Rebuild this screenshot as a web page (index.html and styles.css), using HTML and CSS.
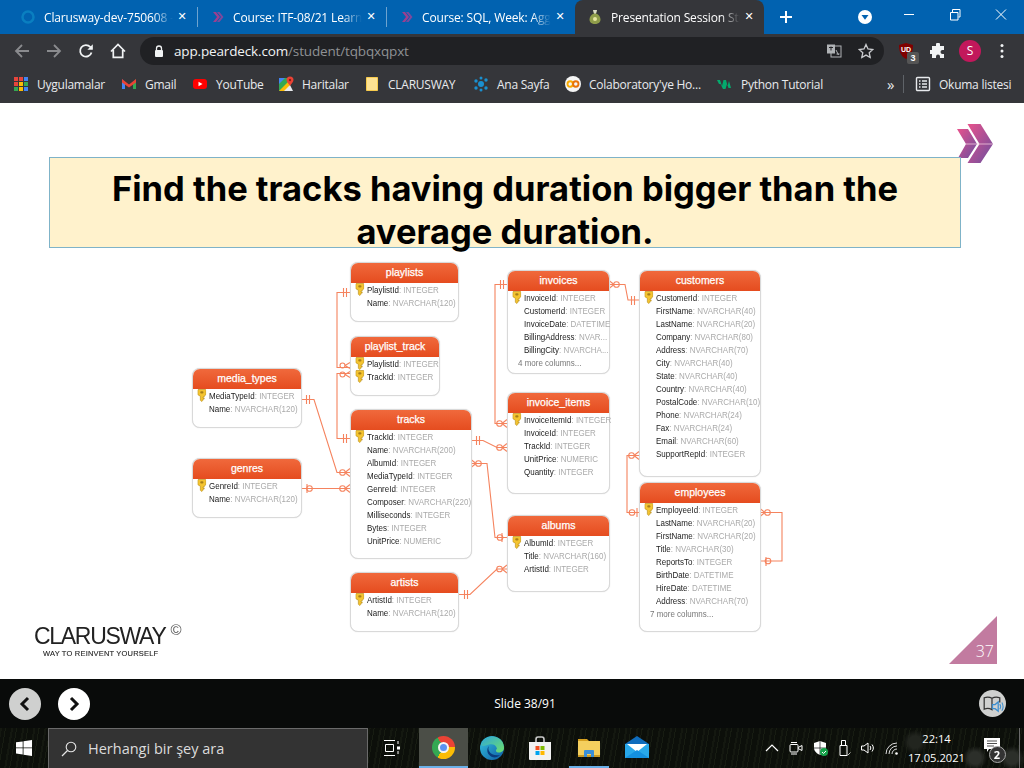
FILE: index.html
```html
<!DOCTYPE html>
<html lang="tr">
<head>
<meta charset="utf-8">
<title>Presentation Session</title>
<link rel="stylesheet" href="styles.css">
</head>
<body>
<svg class="defs" width="0" height="0">
  <defs>
    <symbol id="key" viewBox="0 0 8 13" preserveAspectRatio="none">
      <path d="M.7.5h6.600l.2 1v4.200L6 7.200v.9H5v1h1v1H5v1L4 12.500 2.700 11.300V7.200L.5 5.700v-4.200z" fill="#f4c430" stroke="#b98f1e" stroke-width=".6"/>
      <rect x="2.600" y="2.200" width="2.800" height="2.200" rx="1" fill="#a87f18"/>
    </symbol>
    <symbol id="chev" viewBox="0 0 16 16">
      <path d="M4 3l4 5-4 5h3l4-5-4-5z" fill="#9c3f8f"/>
      <path d="M8 3l4 5-4 5h2.500l4-5-4-5z" fill="#7b4a9e"/>
    </symbol>
    <linearGradient id="lg" x1="0" y1="0" x2="1" y2="1">
      <stop offset="0" stop-color="#e8528c"/><stop offset="1" stop-color="#6b4f9f"/>
    </linearGradient>
  </defs>
</svg>

<header class="tabstrip">
  <div class="tab">
    <svg class="tab-ico" viewBox="0 0 16 16"><circle cx="8" cy="8" r="5.500" fill="none" stroke="#0a7fc0" stroke-width="2.500"/></svg>
    <span class="tab-title">Clarusway-dev-750608 -</span>
    <span class="tab-x">✕</span>
  </div>
  <div class="tab tab-sep">
    <svg class="tab-ico" viewBox="0 0 16 16"><use href="#chev"/></svg>
    <span class="tab-title">Course: ITF-08/21 Learn</span>
    <span class="tab-x">✕</span>
  </div>
  <div class="tab tab-sep">
    <svg class="tab-ico" viewBox="0 0 16 16"><use href="#chev"/></svg>
    <span class="tab-title">Course: SQL, Week: Agg</span>
    <span class="tab-x">✕</span>
  </div>
  <div class="tab tab-active">
    <svg class="tab-ico" viewBox="0 0 16 16"><path d="M6 1h4L9 4.500c3 1 4.500 3.500 4.500 6C13.500 13.500 11 15 8 15s-5.500-1.500-5.500-4.500c0-2.500 1.500-5 4.500-6z" fill="#8f9d4a"/><path d="M6 1h4L9 4.500H7z" fill="#d8d8c8"/><circle cx="8" cy="10" r="2" fill="#e6e6a0"/></svg>
    <span class="tab-title">Presentation Session Stu</span>
    <span class="tab-x">✕</span>
  </div>
  <svg class="newtab" viewBox="0 0 14 14"><path d="M7 1v12M1 7h12" stroke="#fff" stroke-width="2"/></svg>
  <svg class="profile-down" viewBox="0 0 14 14"><circle cx="7" cy="7" r="7" fill="#fff"/><path d="M3.500 5h7L7 9.800z" fill="#0162b0"/></svg>
  <div class="winctl">
    <svg viewBox="0 0 46 30"><path d="M18 14.500h10" stroke="#fff"/></svg>
    <svg viewBox="0 0 46 30"><path d="M18.500 12.500h7.500v7.500h-7.500zM20.500 12v-2.500h7.500v7.500H26.500" fill="none" stroke="#fff"/></svg>
    <svg viewBox="0 0 46 30"><path d="M18 9.500l10 10M28 9.500l-10 10" stroke="#fff"/></svg>
  </div>
</header>

<nav class="toolbar">
  <svg class="tool dim" viewBox="0 0 16 16"><path d="M15 8H2M8 2L2 8l6 6" fill="none" stroke="#8a8b8e" stroke-width="1.800"/></svg>
  <svg class="tool dim" viewBox="0 0 16 16"><path d="M1 8h13M8 2l6 6-6 6" fill="none" stroke="#8a8b8e" stroke-width="1.800"/></svg>
  <svg class="tool" viewBox="0 0 16 16"><path d="M13.500 9.500A5.800 5.800 0 1 1 12.300 4L14 5.700" fill="none" stroke="#f1f3f4" stroke-width="1.800"/><path d="M14.800 1.300v5.400H9.400z" fill="#f1f3f4"/></svg>
  <svg class="tool" viewBox="0 0 16 16"><path d="M1 8.500L8 1.500l7 7M3.300 7v7.300h9.400V7" fill="none" stroke="#f1f3f4" stroke-width="1.700"/></svg>
  <div class="omnibox">
    <svg class="lock" viewBox="0 0 10 13"><path d="M2.500 5V3.500a2.500 2.500 0 0 1 5 0V5" fill="none" stroke="#f1f3f4" stroke-width="1.300"/><rect x="1" y="5" width="8" height="7" rx="1" fill="#f1f3f4"/></svg>
    <span class="url">app.peardeck.com<span class="url-path">/student/tqbqxqpxt</span></span>
    <svg class="omni-ico translate" viewBox="0 0 16 16"><rect x="5" y="3" width="10" height="11" fill="#202124" stroke="#b0b3b6"/><rect x="1" y="1.500" width="8" height="9" fill="#b0b3b6"/><path d="M3 4.500h4M5 3.500v4" stroke="#202124"/><path d="M10 7l2.500 5M10.500 11h3" stroke="#b0b3b6"/></svg>
    <svg class="omni-ico star" viewBox="0 0 16 16"><path d="M8 1.500l2 4.500 4.800.5-3.600 3.200 1 4.800L8 12.100 3.800 14.500l1-4.800L1.200 6.500 6 6z" fill="none" stroke="#c9cbce" stroke-width="1.300"/></svg>
  </div>
  <div class="ext ublock">
    <svg viewBox="0 0 16 16"><path d="M8 0l7 2c0 6-1.500 11-7 14C2.500 13 1 8 1 2z" fill="#800000"/></svg>
    <span class="ub-txt">UD</span><span class="ub-badge">3</span>
  </div>
  <svg class="ext puzzle" viewBox="0 0 16 16"><path d="M6 1.500a2 2 0 0 1 4 0V3h4v4h-1.500a2 2 0 0 0 0 4H14v4H10v-1.500a2 2 0 0 0-4 0V15H2v-4H.8a2 2 0 0 1 0-4H2V3h4z" fill="#f1f3f4"/></svg>
  <span class="avatar">S</span>
  <svg class="ext dots" viewBox="0 0 4 16"><circle cx="2" cy="2.500" r="1.500" fill="#f1f3f4"/><circle cx="2" cy="8" r="1.500" fill="#f1f3f4"/><circle cx="2" cy="13.500" r="1.500" fill="#f1f3f4"/></svg>
</nav>

<nav class="bookmarks">
  <div class="bm">
    <svg class="bm-ico" viewBox="0 0 16 16"><path d="M1 1h4v4H1z" fill="#e8453c"/><path d="M6 1h4v4H6z" fill="#e8453c"/><path d="M11 1h4v4h-4z" fill="#4285f4"/><path d="M1 6h4v4H1z" fill="#e8453c"/><path d="M6 6h4v4H6z" fill="#fbbc05"/><path d="M11 6h4v4h-4z" fill="#34a853"/><path d="M1 11h4v4H1z" fill="#34a853"/><path d="M6 11h4v4H6z" fill="#fbbc05"/><path d="M11 11h4v4h-4z" fill="#4285f4"/></svg>
    <span>Uygulamalar</span>
  </div>
  <div class="bm">
    <svg class="bm-ico" viewBox="0 0 16 16"><path d="M1 3v10h3V7z" fill="#4285f4"/><path d="M15 3v10h-3V7z" fill="#34a853"/><path d="M1 3l7 5.500L15 3v3.500l-7 5-7-5z" fill="#ea4335"/></svg>
    <span>Gmail</span>
  </div>
  <div class="bm">
    <svg class="bm-ico" viewBox="0 0 16 16"><rect x="1" y="3" width="14" height="10" rx="3" fill="#f00"/><path d="M6.500 5.800L10.500 8l-4 2.200z" fill="#fff"/></svg>
    <span>YouTube</span>
  </div>
  <div class="bm">
    <svg class="bm-ico" viewBox="0 0 16 16"><path d="M1 2h11v13H1z" fill="#34a853"/><path d="M1 15L12 4v11z" fill="#fbbc05"/><path d="M1 2h6L1 8z" fill="#4285f4"/><path d="M6 15L12 9l3 6z" fill="#e8eaed"/><path d="M12 .5a3.500 3.500 0 0 1 3.500 3.500C15.500 6 13 8 12 10 11 8 8.500 6 8.500 4A3.500 3.500 0 0 1 12 .5z" fill="#ea4335"/><circle cx="12" cy="4" r="1.200" fill="#8f1c15"/></svg>
    <span>Haritalar</span>
  </div>
  <div class="bm">
    <svg class="bm-ico" viewBox="0 0 16 16"><path d="M2.500 1.500h11v13h-11z" fill="#fde293" stroke="#f7cb4d"/></svg>
    <span>CLARUSWAY</span>
  </div>
  <div class="bm">
    <svg class="bm-ico" viewBox="0 0 16 16"><g fill="#1a90d0"><circle cx="8" cy="8" r="3"/><circle cx="3" cy="5" r="1.700"/><circle cx="13" cy="4" r="1.700"/><circle cx="3" cy="12" r="1.700"/><circle cx="13" cy="12" r="1.700"/><circle cx="8" cy="2" r="1.500"/><circle cx="8" cy="14" r="1.500"/></g></svg>
    <span>Ana Sayfa</span>
  </div>
  <div class="bm">
    <svg class="bm-ico" viewBox="0 0 16 16"><circle cx="8" cy="8" r="8" fill="#f5f5f5"/><circle cx="5.200" cy="8" r="2.700" fill="none" stroke="#f9ab00" stroke-width="1.900"/><circle cx="10.800" cy="8" r="2.700" fill="none" stroke="#e8710a" stroke-width="1.900"/></svg>
    <span>Colaboratory'ye Ho...</span>
  </div>
  <div class="bm">
    <svg class="bm-ico" viewBox="0 0 16 16"><path d="M0 4h3l2 6 1.500-6h2.500l1.500 6L12 5l2 7h-2.500L10 8l-1.500 5H6L3.500 8 2 8z" fill="#04aa6d"/></svg>
    <span>Python Tutorial</span>
  </div>
  <span class="bm-more">»</span>
  <div class="bm bm-read">
    <svg class="bm-ico" viewBox="0 0 16 16"><rect x="1.500" y="1.500" width="13" height="13" rx="1" fill="none" stroke="#e8eaed" stroke-width="1.400"/><path d="M4 5h1.500M7 5h5M4 8h1.500M7 8h5M4 11h1.500M7 11h5" stroke="#e8eaed" stroke-width="1.300"/></svg>
    <span>Okuma listesi</span>
  </div>
</nav>

<main class="slide">
  <svg class="brand" viewBox="0 0 36 39">
    <path d="M10.500 0h13L36 20 23.500 39h-13L22.500 20z" fill="url(#lg)"/>
    <path d="M0 5h11l9 15-9 14H1l8-14z" fill="url(#lg)"/>
    <path d="M9 20h27" stroke="#f3c6dc" stroke-width=".8"/>
  </svg>
  <h1 class="title">Find the tracks having duration bigger than the average duration.</h1>

  <div class="erd">
    <svg class="links" viewBox="0 0 1024 768">
      <g fill="none" stroke="#f5835e" stroke-width="1.100">
        <path d="M350 292.500h-13V367.500h13M350 373.500h-13v65h13"/>
        <path d="M343.500 288v9M346.500 288v9M343.500 434v9M346.500 434v9"/>
        <path d="M345 365.500l5-3M345 365.500l5 3M345 374.500l5-3M345 374.500l5 3"/>
        <circle cx="342.500" cy="365.500" r="2.500"/><circle cx="342.500" cy="374.500" r="2.500"/>

        <path d="M301 399.500h13L337 472.500h13M306.500 395v9M309.500 395v9"/>
        <path d="M345 472.500l5-4M345 472.500l5 4"/><circle cx="342.500" cy="472.500" r="2.800"/>

        <path d="M301 488.500h49M307 484v9"/><circle cx="309.500" cy="488.500" r="2.800"/>
        <path d="M345 488.500l5-4M345 488.500l5 4"/><circle cx="342.500" cy="488.500" r="2.800"/>

        <path d="M471 440.500h12l14 7h10M476.500 436v9M479.500 436v9"/>
        <path d="M502 447.500l5-4M502 447.500l5 4"/><circle cx="499.500" cy="447.500" r="2.800"/>

        <path d="M471 463.500h16l8 74h12M502 533v9"/><circle cx="500" cy="537.500" r="2.800"/>
        <path d="M476 463.500l-5-4M476 463.500l-5 4"/><circle cx="478.500" cy="463.500" r="2.800"/>

        <path d="M458 594.500h12l27-25.500h10M464.500 590v9M467.500 590v9"/>
        <path d="M502 569l5-4M502 569l5 4"/><circle cx="499.500" cy="569" r="2.800"/>

        <path d="M507 284.500h-12v139h12M500.500 280v9M503.500 280v9"/>
        <path d="M502 423.500l5-4M502 423.500l5 4"/><circle cx="499.500" cy="423.500" r="2.800"/>

        <path d="M609 284.500h16l3 15.500h11M631.500 296v9M634.500 296v9"/>
        <path d="M614 284.500l-5-4M614 284.500l-5 4"/><circle cx="616.500" cy="284.500" r="2.800"/>

        <path d="M639 455.500h-12v57h12M637 508v9"/>
        <path d="M634 455.500l5-4M634 455.500l5 4"/><circle cx="631.500" cy="455.500" r="2.800"/>
        <circle cx="632" cy="512.500" r="2.800"/>

        <path d="M760 512.500h22v48.500h-22M766 557v9"/>
        <path d="M765 512.500l-5-4M765 512.500l-5 4"/><circle cx="767.500" cy="512.500" r="2.800"/>
        <circle cx="768" cy="561" r="2.800"/>
      </g>
    </svg>

    <section class="tbl t-playlists">
      <h2>playlists</h2>
      <p class="pk"><svg class="key"><use href="#key"/></svg><b>PlaylistId</b>: INTEGER</p>
      <p><b>Name</b>: NVARCHAR(120)</p>
    </section>
    <section class="tbl t-playlist-track">
      <h2>playlist_track</h2>
      <p class="pk"><svg class="key"><use href="#key"/></svg><b>PlaylistId</b>: INTEGER</p>
      <p class="pk"><svg class="key"><use href="#key"/></svg><b>TrackId</b>: INTEGER</p>
    </section>
    <section class="tbl t-media">
      <h2>media_types</h2>
      <p class="pk"><svg class="key"><use href="#key"/></svg><b>MediaTypeId</b>: INTEGER</p>
      <p><b>Name</b>: NVARCHAR(120)</p>
    </section>
    <section class="tbl t-tracks">
      <h2>tracks</h2>
      <p class="pk"><svg class="key"><use href="#key"/></svg><b>TrackId</b>: INTEGER</p>
      <p><b>Name</b>: NVARCHAR(200)</p>
      <p><b>AlbumId</b>: INTEGER</p>
      <p><b>MediaTypeId</b>: INTEGER</p>
      <p><b>GenreId</b>: INTEGER</p>
      <p><b>Composer</b>: NVARCHAR(220)</p>
      <p><b>Milliseconds</b>: INTEGER</p>
      <p><b>Bytes</b>: INTEGER</p>
      <p><b>UnitPrice</b>: NUMERIC</p>
    </section>
    <section class="tbl t-genres">
      <h2>genres</h2>
      <p class="pk"><svg class="key"><use href="#key"/></svg><b>GenreId</b>: INTEGER</p>
      <p><b>Name</b>: NVARCHAR(120)</p>
    </section>
    <section class="tbl t-artists">
      <h2>artists</h2>
      <p class="pk"><svg class="key"><use href="#key"/></svg><b>ArtistId</b>: INTEGER</p>
      <p><b>Name</b>: NVARCHAR(120)</p>
    </section>
    <section class="tbl t-invoices">
      <h2>invoices</h2>
      <p class="pk"><svg class="key"><use href="#key"/></svg><b>InvoiceId</b>: INTEGER</p>
      <p><b>CustomerId</b>: INTEGER</p>
      <p><b>InvoiceDate</b>: DATETIME</p>
      <p><b>BillingAddress</b>: NVAR...</p>
      <p><b>BillingCity</b>: NVARCHA...</p>
      <p class="more">4 more columns...</p>
    </section>
    <section class="tbl t-items">
      <h2>invoice_items</h2>
      <p class="pk"><svg class="key"><use href="#key"/></svg><b>InvoiceItemId</b>: INTEGER</p>
      <p><b>InvoiceId</b>: INTEGER</p>
      <p><b>TrackId</b>: INTEGER</p>
      <p><b>UnitPrice</b>: NUMERIC</p>
      <p><b>Quantity</b>: INTEGER</p>
    </section>
    <section class="tbl t-albums">
      <h2>albums</h2>
      <p class="pk"><svg class="key"><use href="#key"/></svg><b>AlbumId</b>: INTEGER</p>
      <p><b>Title</b>: NVARCHAR(160)</p>
      <p><b>ArtistId</b>: INTEGER</p>
    </section>
    <section class="tbl t-customers">
      <h2>customers</h2>
      <p class="pk"><svg class="key"><use href="#key"/></svg><b>CustomerId</b>: INTEGER</p>
      <p><b>FirstName</b>: NVARCHAR(40)</p>
      <p><b>LastName</b>: NVARCHAR(20)</p>
      <p><b>Company</b>: NVARCHAR(80)</p>
      <p><b>Address</b>: NVARCHAR(70)</p>
      <p><b>City</b>: NVARCHAR(40)</p>
      <p><b>State</b>: NVARCHAR(40)</p>
      <p><b>Country</b>: NVARCHAR(40)</p>
      <p><b>PostalCode</b>: NVARCHAR(10)</p>
      <p><b>Phone</b>: NVARCHAR(24)</p>
      <p><b>Fax</b>: NVARCHAR(24)</p>
      <p><b>Email</b>: NVARCHAR(60)</p>
      <p><b>SupportRepId</b>: INTEGER</p>
    </section>
    <section class="tbl t-employees">
      <h2>employees</h2>
      <p class="pk"><svg class="key"><use href="#key"/></svg><b>EmployeeId</b>: INTEGER</p>
      <p><b>LastName</b>: NVARCHAR(20)</p>
      <p><b>FirstName</b>: NVARCHAR(20)</p>
      <p><b>Title</b>: NVARCHAR(30)</p>
      <p><b>ReportsTo</b>: INTEGER</p>
      <p><b>BirthDate</b>: DATETIME</p>
      <p><b>HireDate</b>: DATETIME</p>
      <p><b>Address</b>: NVARCHAR(70)</p>
      <p class="more">7 more columns...</p>
    </section>
  </div>

  <div class="logo">
    <div class="logo-name">CLARUSWAY<span class="logo-c">©</span></div>
    <div class="logo-sub">WAY TO REINVENT YOURSELF</div>
  </div>
  <div class="pageno"><span>37</span></div>
</main>

<footer class="deckbar">
  <div class="nav-btn nav-prev"><svg viewBox="0 0 12 16"><path d="M9 2L3 8l6 6" fill="none" stroke="#111" stroke-width="3"/></svg></div>
  <div class="nav-btn nav-next"><svg viewBox="0 0 12 16"><path d="M3 2l6 6-6 6" fill="none" stroke="#111" stroke-width="3"/></svg></div>
  <span class="slide-count">Slide 38/91</span>
  <div class="reader">
    <svg viewBox="0 0 26 26"><path d="M5 7.500c2.500-1 5-1 7.500.5v11c-2.500-1.500-5-1.500-7.500-.5zM12.500 8c2.500-1.500 5-1.500 7.500-.5V12" fill="none" stroke="#333" stroke-width="1.200"/><path d="M13 14h2.500l3-2.500v9l-3-2.500H13z" fill="none" stroke="#3b8ed0" stroke-width="1.200"/><path d="M20 13.500c1 1.500 1 3.500 0 5M22 12c1.500 2.500 1.500 5.500 0 8" fill="none" stroke="#3b8ed0"/></svg>
  </div>
</footer>

<footer class="taskbar">
  <svg class="winlogo" viewBox="0 0 16 16"><path d="M0 2.300L6.700 1.400v6.100H0zM7.500 1.300L16 0v7.500H7.500zM0 8.300h6.700v6.200L0 13.600zM7.500 8.300H16V16l-8.500-1.200z" fill="#fff"/></svg>
  <div class="search">
    <svg class="search-ico" viewBox="0 0 16 16"><circle cx="10" cy="6" r="4.800" fill="none" stroke="#e6e6e6" stroke-width="1.100"/><path d="M6.500 9.500L1 15" stroke="#e6e6e6" stroke-width="1.200"/></svg>
    <span>Herhangi bir şey ara</span>
  </div>
  <div class="task">
    <svg class="task-view" viewBox="0 0 16 16"><path d="M0 .5h11M0 15.500h11M1.500 4.500h8v7h-8z" fill="none" stroke="#fff"/><path d="M14 1v3M14 11v3" stroke="#fff"/><rect x="13" y="6.500" width="3" height="3" fill="#fff"/></svg>
  </div>
  <div class="task task-open">
    <div class="chrome"><span class="chrome-in"></span></div>
  </div>
  <div class="task">
    <svg class="task-ico" viewBox="0 0 24 24"><defs><linearGradient id="edge" x1="0" y1="0" x2="1" y2="1"><stop offset="0" stop-color="#37c7e0"/><stop offset="1" stop-color="#0c59a4"/></linearGradient><linearGradient id="edge2" x1="0" y1="0" x2="1" y2="1"><stop offset="0" stop-color="#2fa7d8"/><stop offset="1" stop-color="#6fe06a"/></linearGradient></defs><circle cx="12" cy="12" r="12" fill="url(#edge)"/><path d="M1 9C3 2 10 0 15 1c6 1 9 6 9 11 0 3-3 5-6 4.500-3-.5-2-3-1-4C16 9 13 7.500 9 8.500 5 9.500 3 11 1 9z" fill="url(#edge2)"/><path d="M9 10c-3 3-2 9 3 11 3 1 6 0 8-2-4 1-9 0-11-4-.8-1.500-.8-3.500 0-5z" fill="#0b3c7d"/></svg>
  </div>
  <div class="task">
    <svg class="task-ico" viewBox="0 0 24 24"><path d="M8 7V3.500C8 2 9 1 10 1h4c1 0 2 1 2 2.500V7" fill="none" stroke="#c9c9c9" stroke-width="1.600"/><path d="M1 6h22v17a1 1 0 0 1-1 1H2a1 1 0 0 1-1-1z" fill="#f2f2f2"/><rect x="7.500" y="10" width="4" height="4" fill="#f25022"/><rect x="12.500" y="10" width="4" height="4" fill="#7fba00"/><rect x="7.500" y="15" width="4" height="4" fill="#00a4ef"/><rect x="12.500" y="15" width="4" height="4" fill="#ffb900"/></svg>
  </div>
  <div class="task task-run">
    <svg class="task-ico" viewBox="0 0 24 24"><path d="M1 3h9l2 2h-2L8 7H1z" fill="#d6a020"/><rect x="1" y="5" width="22" height="16" fill="#f4cf5e"/><rect x="1" y="19" width="22" height="2" fill="#c99a24"/><path d="M7 21v-6a1 1 0 0 1 1-1h8a1 1 0 0 1 1 1v6h-3v-3h-4v3z" fill="#3a8fd8"/></svg>
  </div>
  <div class="task">
    <svg class="task-ico" viewBox="0 0 24 24"><path d="M12 0l12 8v14H0V8z" fill="#0f6cbd"/><path d="M0 8h24v14H0z" fill="#28a8ea"/><path d="M2 8h20l-10 8z" fill="#fff"/><path d="M0 22l12-8 12 8z" fill="#1490df"/></svg>
  </div>
  <div class="tray">
    <svg class="tray-ico" viewBox="0 0 16 16"><path d="M2 11l6-6 6 6" fill="none" stroke="#fff" stroke-width="1.200"/></svg>
    <svg class="tray-ico" viewBox="0 0 16 16"><rect x="2" y="4.500" width="8" height="7.500" rx="1" fill="none" stroke="#fff"/><path d="M10 7.500l4-2v5l-4-2M3 2.500h6M3 14h6" fill="none" stroke="#fff"/></svg>
    <svg class="tray-ico" viewBox="0 0 16 16"><path d="M8 1l6 2v5c0 3-2.500 5.500-6 7-3.500-1.500-6-4-6-7V3z" fill="#fff"/><path d="M8 1v14M2 8h12" stroke="#111" stroke-width=".7"/><circle cx="12" cy="12" r="4" fill="#16a34a"/><path d="M10 12l1.500 1.500 2.500-2.500" fill="none" stroke="#fff"/></svg>
    <svg class="tray-ico" viewBox="0 0 16 16"><path d="M4 5.500h7V15.500H4zM5.500 5.500V.5h4v5" fill="none" stroke="#fff"/><path d="M11.500 15.500l3-3" stroke="#bbb"/></svg>
    <svg class="tray-ico" viewBox="0 0 16 16"><path d="M1.500 6h2.500L8 3v10L4 10H1.500z" fill="none" stroke="#fff"/><path d="M10 6c1 1.300 1 2.700 0 4M12 4.500c1.800 2.300 1.800 4.700 0 7" fill="none" stroke="#fff"/></svg>
    <svg class="tray-ico" viewBox="0 0 16 16"><path d="M2 14a11 11 0 0 1 11-11M5 14a8 8 0 0 1 8-8M8 14a5 5 0 0 1 5-5" fill="none" stroke="#ddd"/><circle cx="12.500" cy="13.500" r="1.300" fill="#fff"/></svg>
  </div>
  <div class="clock"><span>22:14</span><span>17.05.2021</span></div>
  <div class="notif">
    <svg viewBox="0 0 16 16"><path d="M0 1h16v11H5l-2 3v-3H0z" fill="#fff"/><path d="M3 4h10M3 6.500h10M3 9h7" stroke="#222" stroke-width=".8"/></svg>
    <span class="notif-badge">2</span>
  </div>
  <div class="show-desktop"></div>
</footer>
</body>
</html>
```
FILE: styles.css
```css
* { box-sizing: border-box; }
html, body { margin: 0; padding: 0; }
body {
  width: 1024px;
  height: 768px;
  overflow: hidden;
  display: flex;
  flex-direction: column;
  background: #fff;
  font-family: "Open Sans", "Noto Sans", sans-serif;
}
.defs { position: absolute; }
svg { display: block; flex: none; }

/* tab strip */
.tabstrip {
  height: 34px;
  flex: none;
  background: #0162b0;
  display: flex;
  padding: 0 0 0 8px;
  color: #fff;
  font-size: 12px;
}
.tab {
  width: 189px;
  height: 34px;
  padding: 0 6px 0 12px;
  display: flex;
  align-items: center;
  position: relative;
}
.tab-sep::before {
  content: "";
  position: absolute;
  left: 0;
  top: 7px;
  height: 20px;
  width: 1px;
  background: #6ea3cf;
}
.tab-active { background: #35363a; border-radius: 8px 8px 0 0; }
.tab-ico { width: 16px; height: 16px; margin-right: 8px; }
.tab-title {
  width: 129px;
  white-space: nowrap;
  overflow: hidden;
  letter-spacing: -.15px;
  -webkit-mask-image: linear-gradient(90deg, #000 85%, transparent);
  mask-image: linear-gradient(90deg, #000 85%, transparent);
}
.tab-x { width: 18px; text-align: center; font-size: 11px; line-height: 18px; font-weight: 700; font-family: "DejaVu Sans", sans-serif; }
.newtab { width: 14px; height: 14px; margin: 10px 0 0 15px; }
.profile-down { width: 14px; height: 14px; margin: 10px 0 0 65px; }
.winctl { display: flex; margin-left: 14px; }
.winctl svg { width: 46px; height: 30px; }

/* toolbar */
.toolbar {
  height: 34px;
  flex: none;
  background: #35363a;
  display: flex;
  align-items: center;
  padding-left: 14px;
}
.tool { width: 16px; height: 16px; margin-right: 16px; }
.omnibox {
  width: 744px;
  height: 28px;
  margin-left: -2px;
  background: #202124;
  border-radius: 14px;
  display: flex;
  align-items: center;
  padding-left: 14px;
}
.lock { width: 10px; height: 13px; margin-right: 10px; }
.url { width: 640px; font-size: 13.500px; color: #f1f3f4; white-space: nowrap; letter-spacing: -.15px; }
.url-path { color: #8f9194; }
.omni-ico { width: 16px; height: 16px; }
.translate { margin-left: 12px; }
.star { margin-left: 16px; }
.ext { width: 16px; height: 16px; }
.ublock { position: relative; margin-left: 14px; }
.ublock svg { width: 16px; height: 16px; }
.ub-txt { position: absolute; left: 3px; top: 3px; font: 700 7px "Liberation Sans", sans-serif; color: #fff; }
.ub-badge {
  position: absolute;
  left: 9px;
  top: 9px;
  width: 12px;
  height: 12px;
  background: #555;
  border-radius: 2px;
  color: #fff;
  font: 700 9px/12px "Liberation Sans", sans-serif;
  text-align: center;
}
.puzzle { margin-left: 16px; }
.avatar {
  width: 22px;
  height: 22px;
  margin-left: 13px;
  border-radius: 50%;
  background: #c2185b;
  color: #fff;
  font-size: 12px;
  line-height: 22px;
  text-align: center;
}
.dots { width: 4px; margin-left: 19px; }

/* bookmarks */
.bookmarks {
  height: 35px;
  flex: none;
  background: #35363a;
  display: grid;
  grid-template-columns: 108px 71px 86px 86px 109px 92px 152px 166px 25px 1fr;
  align-items: center;
  padding: 0 0 3px 13px;
  color: #e8eaed;
  font-size: 12px;
  letter-spacing: -.25px;
}
.bm { display: flex; align-items: center; white-space: nowrap; }
.bm-ico { width: 16px; height: 16px; margin-right: 8px; }
.bm-more { font-size: 15px; line-height: 18px; padding-left: 4px; }
.bm-read { border-left: 1px solid #5f6368; padding-left: 11px; height: 18px; margin-left: -5px; }

/* slide */
.slide {
  flex: none;
  height: 576px;
  position: relative;
  overflow: hidden;
  background: #fff;
}
.brand { position: absolute; left: 957px; top: 21px; width: 36px; height: 39px; }
.title {
  position: absolute;
  left: 49px;
  top: 54px;
  width: 912px;
  height: 91px;
  margin: 0;
  padding: 9px 50px 0;
  background: #fff2cc;
  border: 1px solid #7fb3c8;
  color: #000;
  font: 700 34.500px/43px "Inter", sans-serif;
  text-align: center;
}
.erd { position: absolute; left: 0; top: -103px; width: 1024px; height: 768px; filter: blur(.3px); }
.links { position: absolute; left: 0; top: 0; width: 1024px; height: 768px; }

.tbl {
  position: absolute;
  background: #fff;
  border: 1px solid #d9d9d9;
  border-radius: 8px;
  box-shadow: 0 0 1px #ccc;
  font: 9.500px/13px "Liberation Sans", sans-serif;
  color: #aaa;
  white-space: nowrap;
}
.tbl h2 {
  margin: 0;
  height: 20px;
  border-radius: 7px 7px 0 0;
  font: 400 10.500px/19px "Liberation Sans", sans-serif;
  -webkit-text-stroke: .25px #fff;
  color: #fff;
  text-align: center;
  background: linear-gradient(#f0693c, #e54c1f);
}
.tbl p {
  margin: 0;
  height: 13px;
  padding-left: 16px;
  position: relative;
  transform: scaleX(.84);
  transform-origin: 16px 0;
}
.tbl b { font-weight: 400; color: #222; }
.tbl .more { padding-left: 10px; transform-origin: 10px 0; color: #777; }
.key { position: absolute; left: 2px; top: 0; width: 11px; height: 13px; }

.t-playlists { left: 350px; top: 262px; width: 109px; height: 60px; }
.t-playlist-track { left: 350px; top: 336px; width: 90px; height: 60px; }
.t-media { left: 192px; top: 368px; width: 110px; height: 60px; }
.t-tracks { left: 350px; top: 409px; width: 122px; height: 150px; }
.t-genres { left: 192px; top: 458px; width: 110px; height: 60px; }
.t-artists { left: 350px; top: 572px; width: 109px; height: 60px; }
.t-invoices { left: 507px; top: 270px; width: 103px; height: 104px; }
.t-items { left: 507px; top: 392px; width: 103px; height: 102px; }
.t-albums { left: 507px; top: 515px; width: 103px; height: 77px; }
.t-customers { left: 639px; top: 270px; width: 122px; height: 207px; }
.t-employees { left: 639px; top: 482px; width: 122px; height: 150px; }

.logo { position: absolute; left: 34px; top: 514px; color: #222; }
.logo-name { font: 400 23px/26px "Liberation Sans", sans-serif; letter-spacing: -1.3px; white-space: nowrap; }
.logo-c { font-size: 15px; vertical-align: 9px; color: #555; margin-left: 5px; letter-spacing: 0; }
.logo-sub { font: 400 7.500px/10px "Liberation Sans", sans-serif; padding-left: 9px; white-space: nowrap; letter-spacing: .2px; -webkit-text-stroke: .1px #222; }
.pageno {
  position: absolute;
  left: 949px;
  top: 513px;
  width: 48px;
  height: 48px;
  background: #c27ba0;
  clip-path: polygon(100% 0, 100% 100%, 0 100%);
  color: #fff;
  font-size: 16px;
  font-weight: 300;
  line-height: 18px;
}
.pageno span { position: absolute; right: 3px; bottom: 4px; }

/* deck navigation */
.deckbar {
  height: 49px;
  flex: none;
  background: #090b0a;
  display: flex;
  align-items: center;
  padding-left: 9px;
}
.nav-btn { width: 32px; height: 32px; border-radius: 50%; display: flex; align-items: center; justify-content: center; }
.nav-btn svg { width: 12px; height: 16px; }
.nav-prev { background: #cfd0cf; }
.nav-next { background: #fff; margin-left: 17px; }
.slide-count { width: 120px; margin-left: 375px; text-align: center; color: #fff; font-size: 12px; }
.reader { width: 27px; height: 27px; border-radius: 50%; background: #cfd0cf; margin-left: 394px; }
.reader svg { width: 27px; height: 27px; }

/* taskbar */
.taskbar {
  height: 40px;
  flex: none;
  display: flex;
  background:
    radial-gradient(circle at 915px 14px, #22251f 0 6px, transparent 12px),
    radial-gradient(circle at 975px 30px, #2c2f2a 0 6px, transparent 12px),
    radial-gradient(circle at 1012px 30px, #2c2f2a 0 6px, transparent 12px),
    repeating-linear-gradient(100deg, #141810 0 2px, #0d100b 2px 5px, #171c12 5px 6px, #0c0f0a 6px 11px);
  color: #fff;
}
.winlogo { width: 16px; height: 16px; margin: 12px 16px 0 16px; }
.search {
  width: 320px;
  height: 40px;
  background: #333;
  border: 1px solid #6a6a6a;
  border-bottom: 0;
  display: flex;
  align-items: center;
  padding-left: 12px;
  font-size: 14.500px;
  color: #dcdcdc;
}
.search-ico { width: 16px; height: 16px; margin-right: 11px; }
.task { width: 48.500px; height: 40px; display: flex; align-items: center; justify-content: center; position: relative; }
.task-view { width: 16px; height: 16px; }
.task-ico { width: 24px; height: 24px; }
.task-open { background: #4b4e47; border-bottom: 2px solid #6ab0e8; margin-left: 2.500px; }
.task-run::after {
  content: "";
  position: absolute;
  left: 4px;
  right: 4px;
  bottom: 0;
  height: 2px;
  background: #6ab0e8;
}
.chrome {
  width: 23px;
  height: 23px;
  border-radius: 50%;
  background: conic-gradient(#ea4335 0 90deg, #fbbc05 90deg 210deg, #34a853 210deg 330deg, #ea4335 330deg);
  display: flex;
  align-items: center;
  justify-content: center;
}
.chrome-in { width: 11px; height: 11px; border-radius: 50%; background: #5a93f0; border: 2px solid #f4f4f4; }
.tray { display: flex; align-items: center; margin-left: 98px; }
.tray-ico { width: 16px; height: 16px; margin: 0 4px; }
.clock {
  width: 62px;
  margin-left: 2px;
  display: flex;
  flex-direction: column;
  align-items: center;
  justify-content: center;
  font-size: 11.200px;
  line-height: 19px;
}
.notif { width: 49px; position: relative; display: flex; align-items: center; justify-content: center; }
.notif svg { width: 16px; height: 16px; margin-top: -6px; }
.notif-badge {
  position: absolute;
  left: 21px;
  top: 18px;
  width: 17px;
  height: 17px;
  border-radius: 50%;
  background: #333;
  border: 1px solid #aaa;
  font-size: 11px;
  font-weight: 700;
  line-height: 15px;
  text-align: center;
}
.show-desktop { width: 1px; margin-left: 2px; background: #6a6a6a; }
```
